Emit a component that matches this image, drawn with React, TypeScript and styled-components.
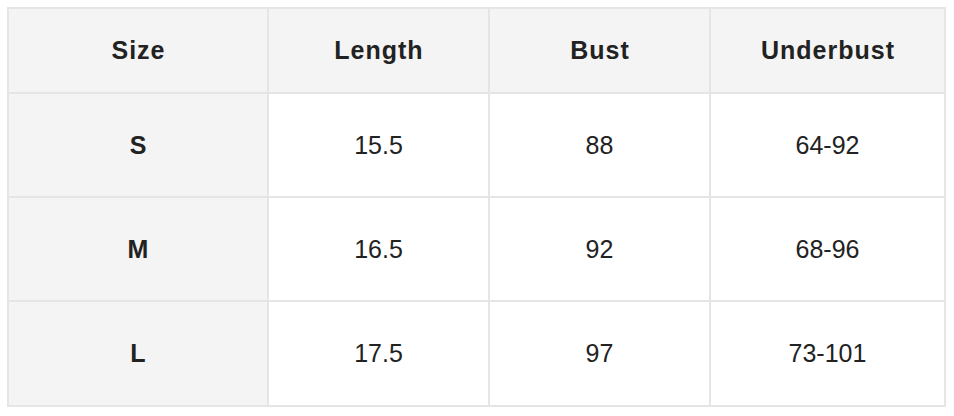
import React from "react";
import styled, { createGlobalStyle } from "styled-components";

const Global = createGlobalStyle`
  html, body { margin: 0; padding: 0; background: #ffffff; }
  body { font-family: "Liberation Sans", Arial, Helvetica, sans-serif; }
`;

const Page = styled.div`
  padding: 7px 0 0 7px;
`;

const Table = styled.div`
  display: grid;
  width: 939px;
  box-sizing: border-box;
  grid-template-columns: 258px 219px 219px 233px;
  grid-template-rows: 83px 102px 102px 103px;
  gap: 2px;
  padding: 2px;
  background: #e5e5e5;
`;

const Cell = styled.div<{ $shade?: boolean; $bold?: boolean }>`
  display: flex;
  align-items: center;
  justify-content: center;
  background: ${(p) => (p.$shade ? "#f4f4f4" : "#ffffff")};
  color: #222222;
  font-size: 25px;
  font-weight: ${(p) => (p.$bold ? 700 : 400)};
  letter-spacing: ${(p) => (p.$bold ? "1px" : "0")};
  padding-left: ${(p) => (p.$bold ? "1px" : "0")};
`;

const headers = ["Size", "Length", "Bust", "Underbust"];
const rows = [
  ["S", "15.5", "88", "64-92"],
  ["M", "16.5", "92", "68-96"],
  ["L", "17.5", "97", "73-101"],
];

export default function App() {
  return (
    <>
      <Global />
      <Page>
        <Table>
          {headers.map((h) => (
            <Cell key={h} $shade $bold>
              {h}
            </Cell>
          ))}
          {rows.map((r) =>
            r.map((v, i) => (
              <Cell key={r[0] + i} $shade={i === 0} $bold={i === 0}>
                {v}
              </Cell>
            ))
          )}
        </Table>
      </Page>
    </>
  );
}
